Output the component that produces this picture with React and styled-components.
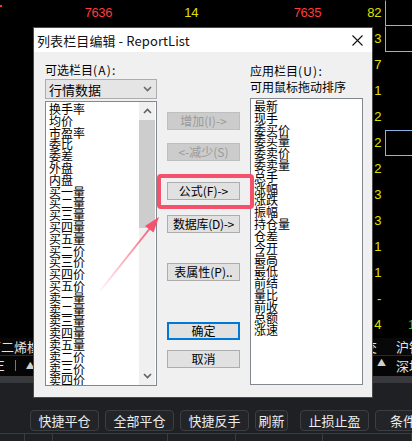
import React from 'react';
import styled, { createGlobalStyle } from 'styled-components';

const Global = createGlobalStyle`
  html, body { margin: 0; padding: 0; background: #000; }
  body { width: 412px; height: 441px; overflow: hidden; font-family: "Noto Sans CJK SC", "Noto Sans", sans-serif; }
  * { box-sizing: border-box; }
`;

const Page = styled.div`
  position: relative;
  width: 412px;
  height: 441px;
  overflow: hidden;
  background: #000;
  display: flex;
  flex-direction: column;
`;

/* ---------- background market screen ---------- */
const Market = styled.div`
  display: flex;
  flex-direction: column;
  height: 338px;
  position: relative;
`;

const MRow = styled.div`
  display: grid;
  grid-template-columns: 112px 86px 123px 60px 4px 27px;
  height: 26px;
  align-items: center;
  font-family: "Liberation Sans", "DejaVu Sans", sans-serif;
  font-size: 13px;
`;

const Num = styled.span`
  text-align: right;
  color: ${p => p.$c || '#e0e000'};
  letter-spacing: -0.4px;
  line-height: 26px;
`;

const Cell = styled.div`
  height: 26px;
  align-self: stretch;
  border-left: 1px solid ${p => (p.$box ? '#8db3e6' : 'transparent')};
  border-bottom: 1px solid ${p => (p.$box ? '#8db3e6' : 'transparent')};
  border-top: 1px solid ${p => (p.$full ? '#8db3e6' : 'transparent')};
  color: #14c814;
  padding-left: 22px;
  line-height: 24px;
`;

const RedTick = styled.span`
  position: absolute;
  left: 0;
  top: 5px;
  width: 2px;
  height: 2px;
  background: #ff3030;
`;

const InfoRow = styled.div`
  height: 18px;
  display: flex;
  align-items: center;
  color: #e4e4e4;
  font-size: 13px;
  background: #080808;
  border-bottom: 1px solid #2a2a2a;
  white-space: nowrap;
  overflow: hidden;
`;

const Clip = styled.span`
  margin-left: ${p => p.$ml || '0px'};
`;

const RightGroup = styled.span`
  margin-left: auto;
  margin-right: -10px;
  display: flex;
  gap: ${p => p.$gap || 10}px;
`;

const IndexRow = styled.div`
  height: 21px;
  display: flex;
  align-items: center;
  color: #e4e4e4;
  font-size: 13px;
  background: #050505;
  white-space: nowrap;
  overflow: hidden;
`;

const Sep = styled.span`
  width: 1px;
  height: 11px;
  background: #777;
  margin: 0 10px 0 10px;
`;

const Tri = styled.span`
  font-size: 9px;
  color: #d0d0d0;
`;

const Band = styled.div`
  height: 7px;
  background: #38393c;
`;

const Bottom = styled.div`
  flex: 1;
  background: #1f2023;
  display: flex;
  flex-direction: column;
`;

const Toolbar = styled.div`
  display: flex;
  gap: 6px;
  padding: 27px 0 0 30px;
  white-space: nowrap;
`;

const ToolBtn = styled.div`
  flex: none;
  width: ${p => p.$w}px;
  margin-left: ${p => p.$ml || 0}px;
  height: 21px;
  border: 1px solid #3c3e43;
  border-radius: 4px;
  background: #232428;
  color: #ececec;
  font-size: 13px;
  line-height: 19px;
  text-align: center;
`;

const HeadRow = styled.div`
  margin-top: 2px;
  display: flex;
  border-top: 1px solid #3a3b3f;
  height: 8px;
`;

const HeadCell = styled.div`
  flex: none;
  width: ${p => p.$w}px;
  border-right: 1px solid #3a3b3f;
`;

/* ---------- dialog ---------- */
const Dialog = styled.div`
  position: absolute;
  left: 34px;
  top: 28px;
  width: 338px;
  height: 369px;
  background: #f0f0f0;
  display: flex;
  flex-direction: column;
  box-shadow: 0 0 0 1px #4a4a4a;
`;

const TitleBar = styled.div`
  height: 24px;
  background: #fff;
  display: flex;
  align-items: center;
  padding: 0 9px 0 3px;
  font-size: 13px;
  color: #111;
`;

const TitleText = styled.span`
  flex: 1;
  letter-spacing: 0.1px;
`;

const Body = styled.div`
  flex: 1;
  display: grid;
  grid-template-columns: 112px 73px 113px;
  column-gap: 10px;
  padding: 11px 9px 0 11px;
  font-size: 12px;
  color: #000;
`;

const Col = styled.div`
  display: flex;
  flex-direction: column;
  align-items: stretch;
`;

const Label = styled.div`
  height: ${p => p.$h || 14}px;
  line-height: ${p => p.$h || 14}px;
  font-size: 12px;
  white-space: nowrap;
`;

const Latin = styled.span`
  letter-spacing: 1.2px;
`;

const Combo = styled.div`
  margin-top: 2px;
  height: 20px;
  background: #e5e5e5;
  border: 1px solid #adadad;
  display: flex;
  align-items: center;
  padding: 0 4px 0 3px;
  font-size: 13px;
`;

const ComboText = styled.span`
  flex: 1;
`;

const ListBox = styled.div`
  margin-top: ${p => p.$mt}px;
  height: ${p => p.$h}px;
  background: #fff;
  border: 1px solid #828790;
  display: flex;
  overflow: hidden;
`;

const Items = styled.div`
  flex: 1;
  padding: 1px 0 0 3px;
  display: flex;
  flex-direction: column;
  overflow: hidden;
`;

const Item = styled.div`
  height: 11.8px;
  line-height: 11.8px;
  font-size: 12px;
  white-space: nowrap;
  flex: none;
  overflow: visible;
`;

const ScrollBar = styled.div`
  width: 16px;
  background: #f0f0f0;
  display: flex;
  flex-direction: column;
  margin-right: 1px;
`;

const ScrollBtn = styled.div`
  height: 18px;
  display: flex;
  align-items: center;
  justify-content: center;
  background: #f0f0f0;
`;

const Thumb = styled.div`
  height: 108px;
  background: #cdcdcd;
`;

const Track = styled.div`
  flex: 1;
`;

const Btn = styled.div`
  margin-top: ${p => p.$mt}px;
  height: 18px;
  background: ${p => (p.$disabled ? '#cccccc' : '#e1e1e1')};
  border: ${p => (p.$focus ? '2px solid #0078d7' : `1px solid ${p.$disabled ? '#bfbfbf' : '#adadad'}`)};
  color: ${p => (p.$disabled ? '#9a9a9a' : '#000')};
  font-size: 12px;
  line-height: ${p => (p.$focus ? 14 : 16)}px;
  text-align: center;
  white-space: nowrap;
  letter-spacing: ${p => p.$ls || 0}px;
`;

/* ---------- annotations ---------- */
const Highlight = styled.div`
  position: absolute;
  left: 157px;
  top: 174px;
  width: 97px;
  height: 35px;
  border: 4px solid #f5506c;
  border-radius: 4px;
  pointer-events: none;
`;

const ArrowSvg = styled.svg`
  position: absolute;
  left: 0;
  top: 0;
  pointer-events: none;
`;

const Chevron = ({ dir = 'up', color = '#606060', w = 9 }) => (
  <svg width={w} height="6" viewBox="0 0 9 6">
    <path
      d={dir === 'up' ? 'M1 5 L4.5 1.5 L8 5' : 'M1 1 L4.5 4.5 L8 1'}
      fill="none"
      stroke={color}
      strokeWidth="1.6"
    />
  </svg>
);

const rightCol = ['82', '3', '7', '1', '2', '2', '2', '3', '3', '1', '1', '-', '4'];

const leftItems = [
  '换手率', '均价', '市盈率', '委比', '委差', '外盘', '内盘',
  '买一量', '买二量', '买三量', '买四量', '买五量',
  '买二价', '买三价', '买四价', '买五价',
  '卖一量', '卖二量', '卖三量', '卖四量', '卖五量',
  '卖二价', '卖三价', '卖四价',
];

const rightItems = [
  '最新', '现手', '委买价', '委买量', '委卖价', '委卖量', '总手',
  '涨幅', '涨跌', '振幅', '持仓量', '仓差', '今开', '最高', '最低',
  '前结', '量比', '前收', '总额', '涨速',
];

const tools = [
  { t: '快捷平仓', w: 69 },
  { t: '全部平仓', w: 69 },
  { t: '快捷反手', w: 69 },
  { t: '刷新', w: 33 },
  { t: '止损止盈', w: 69, ml: 6 },
  { t: '条件单', w: 69 },
];

export default function App() {
  return (
    <>
      <Global />
      <Page>
        <Market>
          <RedTick />
          {rightCol.map((v, i) => (
            <MRow key={i}>
              <Num $c="#ff3b3b">{i === 0 ? '7636' : ''}</Num>
              <Num>{i === 0 ? '14' : ''}</Num>
              <Num $c="#ff3b3b">{i === 0 ? '7635' : ''}</Num>
              <Num>{v}</Num>
              <span />
              <Cell $box={i === 0 || i === 1 || i === 5} $full={i === 5}>
                {i === 12 ? '1' : ''}
              </Cell>
            </MRow>
          ))}
        </Market>
        <InfoRow>
          <Clip $ml="-12px">丁二烯橡胶</Clip>
          <RightGroup $gap={19}>
            <span>交</span>
            <span>沪银</span>
          </RightGroup>
        </InfoRow>
        <IndexRow>
          <Clip $ml="-3px">E</Clip>
          <Sep />
          <Tri>▲</Tri>
          <RightGroup>
            <Tri>▲</Tri>
            <span>深圳</span>
          </RightGroup>
        </IndexRow>
        <Band />
        <Bottom>
          <Toolbar>
            {tools.map(b => (
              <ToolBtn key={b.t} $w={b.w} $ml={b.ml}>{b.t}</ToolBtn>
            ))}
          </Toolbar>
          <HeadRow>
            {[25, 28, 115, 68, 87, 89].map((w, i) => (
              <HeadCell key={i} $w={w} />
            ))}
          </HeadRow>
        </Bottom>

        <Dialog>
          <TitleBar>
            <TitleText>列表栏目编辑 - ReportList</TitleText>
            <svg width="11" height="11" viewBox="0 0 11 11">
              <path d="M0.5 0.5 L10.5 10.5 M10.5 0.5 L0.5 10.5" stroke="#111" strokeWidth="1.1" />
            </svg>
          </TitleBar>
          <Body>
            <Col>
              <Label>可选栏目<Latin>(A):</Latin></Label>
              <Combo>
                <ComboText>行情数据</ComboText>
                <Chevron dir="down" color="#6a6a6a" />
              </Combo>
              <ListBox $mt={2} $h={285}>
                <Items>
                  {leftItems.map(t => <Item key={t}>{t}</Item>)}
                </Items>
                <ScrollBar>
                  <ScrollBtn><Chevron dir="up" /></ScrollBtn>
                  <Thumb />
                  <Track />
                  <ScrollBtn><Chevron dir="down" /></ScrollBtn>
                </ScrollBar>
              </ListBox>
            </Col>
            <Col>
              <Btn $mt={49} $disabled>增加(I)-&gt;</Btn>
              <Btn $mt={13} $disabled>&lt;-减少(S)</Btn>
              <Btn $mt={21}>公式(F)-&gt;</Btn>
              <Btn $mt={15} $ls={-0.3}>数据库(D)-&gt;</Btn>
              <Btn $mt={30}>表属性(P)..</Btn>
              <Btn $mt={41} $focus>确定</Btn>
              <Btn $mt={10}>取消</Btn>
            </Col>
            <Col>
              <Label $h={16}>应用栏目<Latin>(U):</Latin></Label>
              <Label $h={16}>可用鼠标拖动排序</Label>
              <ListBox $mt={3} $h={287}>
                <Items>
                  {rightItems.map(t => <Item key={t}>{t}</Item>)}
                </Items>
              </ListBox>
            </Col>
          </Body>
        </Dialog>

        <Highlight />
        <ArrowSvg width="412" height="441" viewBox="0 0 412 441">
          <defs>
            <linearGradient id="arrowGrad" x1="100" y1="291" x2="158" y2="218" gradientUnits="userSpaceOnUse">
              <stop offset="0" stopColor="#f5506c" stopOpacity="0.05" />
              <stop offset="1" stopColor="#f5506c" stopOpacity="1" />
            </linearGradient>
          </defs>
          <line x1="100" y1="291" x2="151" y2="227" stroke="url(#arrowGrad)" strokeWidth="2" />
          <polygon points="159,217 153.5,232.5 145,226" fill="#f5506c" />
        </ArrowSvg>
      </Page>
    </>
  );
}
